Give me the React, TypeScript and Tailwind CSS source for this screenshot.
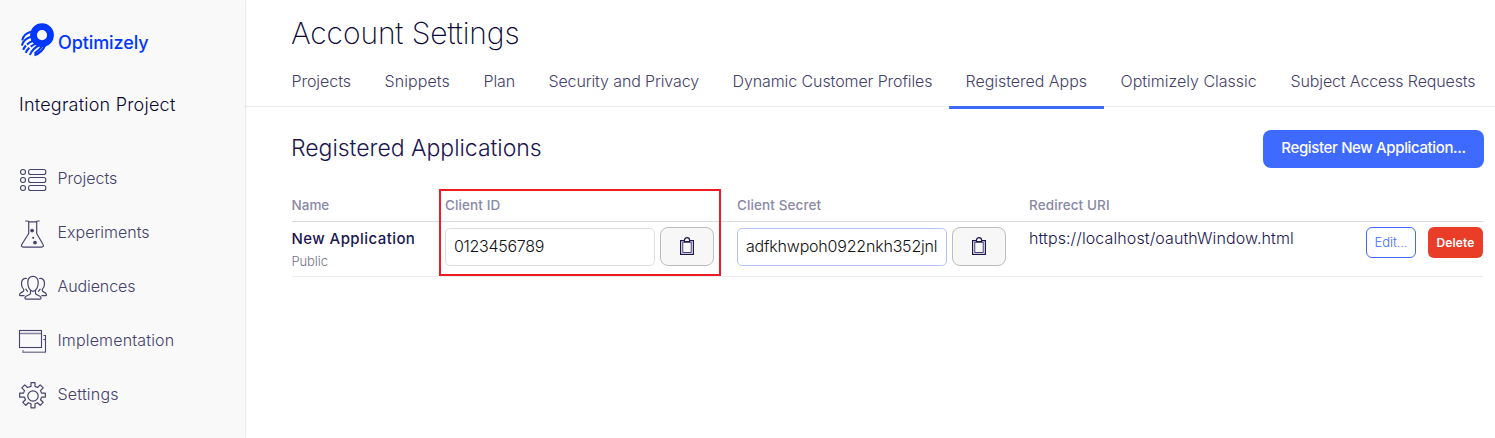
import React from "react";

const ICON = "h-7 w-7 shrink-0 overflow-visible";

function Logo() {
  return (
    <svg className="h-[34px] w-[34px] shrink-0" viewBox="0 0 34 34" fill="none">
      <g stroke="#0037ff" strokeWidth="2.1">
        <path d="M11 8.800C6.500 10 3 13.200 2.300 17.400" />
        <path d="M11.500 13.600C6.600 15.200 2.800 18.400 1.900 22.600" />
        <path d="M13 17.800C8.600 19.600 4.600 22.800 3.200 26.800" strokeDasharray="7 1.500 20" />
        <path d="M16 20.600C11.400 22.600 7.400 25.600 5.800 29.800" strokeDasharray="6 1.800 20" />
        <path d="M20 21.800C15.600 24 11.600 27.400 9.900 32" />
        <path d="M25.800 21C23.400 26.600 19.600 30.600 14.400 32.300M22.500 22.500C20.500 25.500 17.500 28.500 14.500 30.500" />
      </g>
      <circle cx="22" cy="12.100" r="8.500" stroke="#0037ff" strokeWidth="6.800" />
    </svg>
  );
}

function ProjectsIcon() {
  return (
    <svg className={ICON} viewBox="0 0 28 28" fill="none" stroke="#46436d" strokeWidth="1.1">
      {[6, 14, 22].map((y) => (
        <g key={y}>
          <circle cx="4" cy={y} r="2.5" />
          <rect x="9.6" y={y - 2.5} width="17.2" height="5" rx="2" />
        </g>
      ))}
    </svg>
  );
}

function FlaskIcon() {
  return (
    <svg className={ICON} viewBox="0 0 28 28" fill="none" stroke="#46436d" strokeWidth="1.2" strokeLinecap="round" strokeLinejoin="round">
      <path d="M6.600 1h1.800c1.200 0 1.600.9 2.800.9h5c1.200 0 1.600-.9 2.800-.9h1.200M9.700 1.600v11.900L2.900 24.200c-1.100 1.800-.4 2.900 1.400 2.900h18.200c1.800 0 2.500-1.100 1.400-2.900L17.700 13.500V1.600" />
      <circle cx="13.100" cy="10.600" r="1.900" fill="#46436d" stroke="none" />
      <circle cx="14.200" cy="17.800" r="1.100" fill="#46436d" stroke="none" />
      <circle cx="16" cy="22.600" r="1.900" fill="#46436d" stroke="none" />
    </svg>
  );
}

function AudienceIcon() {
  return (
    <svg className={ICON} viewBox="0 0 28 28" fill="none" stroke="#46436d" strokeWidth="1.2" strokeLinecap="round" strokeLinejoin="round">
      <path d="M14 2.400c-3.400 0-5.200 2.500-5.200 6.300 0 4.100 2 8.700 5.200 8.700s5.200-4.600 5.200-8.700c0-3.800-1.800-6.300-5.200-6.300Z" />
      <path d="M11.500 16.600v2.800c0 1.900-5.600 1.800-5.600 4.600 0 .8.500 1.200 1.300 1.200h13.600c.8 0 1.300-.4 1.300-1.200 0-2.800-5.600-2.700-5.600-4.600v-2.800" />
      <path d="M7.600 4.500C4.400 3.900 2.500 6.200 2.500 9.400c0 2.600.8 4.700 2.200 6v1.400c0 1.300-4.200 1.500-4.200 3.900 0 .7.400 1 1 1h3.600M6.900 15.200l1.600 2.100" />
      <path d="M20.400 4.500c3.200-.6 5.100 1.700 5.100 4.900 0 2.600-.8 4.700-2.200 6v1.400c0 1.300 4.200 1.500 4.200 3.900 0 .7-.4 1-1 1h-3.600M21.100 15.200l-1.600 2.100" />
    </svg>
  );
}

function WindowIcon() {
  return (
    <svg className={ICON} viewBox="0 0 28 28" fill="none" stroke="#46436d" strokeWidth="1.100">
      <rect x=".5" y="2.500" width="22" height="17" />
      <path d="M.5 5.500h22" strokeWidth="1.500" opacity=".65" />
      <path d="M24.500 7.500h2V24M24.500 11.500h2" />
      <path d="M4 22v2.200h23" strokeWidth="1.400" opacity=".65" />
    </svg>
  );
}

function GearIcon() {
  return (
    <svg className={ICON} viewBox="0 0 28 28" fill="none" stroke="#46436d" strokeWidth="1.200" strokeLinejoin="round">
      <circle cx="14" cy="14" r="5.200" />
      <path d="M12 .7h4v3.700l2.500 1.100 2.700-2.600 3 3-2.700 2.700 1 2.500h3.800v4.100h-3.700l-1.100 2.500 2.700 2.600-3 3-2.700-2.600-2.500 1.100v4h-4v-4l-2.500-1.100-2.700 2.600-3-3 2.700-2.600-1.100-2.500H.7v-4.100h3.800l1-2.500-2.700-2.700 3-3 2.700 2.600L12 4.400Z" />
    </svg>
  );
}

function ClipboardIcon() {
  return (
    <svg className="h-[18px] w-4" viewBox="0 0 16 18" fill="none" stroke="#1b1650">
      <rect x="1.600" y="3.600" width="12.800" height="13.800" strokeWidth="1.200" />
      <rect x="3.800" y="5.200" width="8.400" height="10.300" strokeWidth=".8" />
      <path d="M5.400 4.600V3.300a2.600 2.600 0 0 1 5.200 0v1.300Z" strokeWidth="1.200" fill="#f7f7f7" />
    </svg>
  );
}

const nav = [
  { label: "Projects", icon: <ProjectsIcon />, cls: "tracking-[0px]" },
  { label: "Experiments", icon: <FlaskIcon />, cls: "tracking-[0px]" },
  { label: "Audiences", icon: <AudienceIcon />, cls: "tracking-[-0.1px]" },
  { label: "Implementation", icon: <WindowIcon />, cls: "tracking-[0.16px]" },
  { label: "Settings", icon: <GearIcon />, cls: "tracking-[0.2px]" },
];

const tabs = [
  { label: "Projects", cls: "w-[93px] tracking-[-0.05px]" },
  { label: "Snippets", cls: "w-[99px] tracking-[0.08px]" },
  { label: "Plan", cls: "w-[65px] tracking-[-0.1px]" },
  { label: "Security and Privacy", cls: "w-[184px] tracking-[-0.13px]" },
  { label: "Dynamic Customer Profiles", cls: "w-[233px] tracking-[-0.09px]" },
  { label: "Registered Apps", cls: "w-[155px] tracking-[-0.03px]", active: true },
  { label: "Optimizely Classic", cls: "w-[170px] tracking-[0px]" },
  { label: "Subject Access Requests", cls: "w-[219px] tracking-[-0.13px]" },
];

function SecretField({ value, focused, cls }: { value: string; focused?: boolean; cls: string }) {
  return (
    <div className="flex items-start gap-[5px]">
      <div
        className={`mt-px flex h-[38px] w-[210px] items-center overflow-hidden rounded-[5px] border bg-white pb-[2px] pl-2 text-base font-light whitespace-nowrap text-[#111] ${cls} ${focused ? "border-[#b5c5fb]" : "border-[#dedede]"}`}
      >
        {value}
      </div>
      <button className="flex h-[39px] w-[54px] items-center justify-center rounded-lg border border-[#bdbdbd] bg-[#f7f7f7] pb-px">
        <ClipboardIcon />
      </button>
    </div>
  );
}

const GRID = "grid grid-cols-[153px_292px_292px_1fr]";

export default function App() {
  return (
    <div className="flex h-[438px] w-[1495px] overflow-hidden bg-white font-['Inter','Liberation_Sans',sans-serif]">
      <aside className="relative z-10 h-full w-[245px] shrink-0 bg-[#f9f9f9] shadow-[0_0_2px_rgba(0,0,0,0.25)]">
        <div className="flex h-[57px] items-end pl-5">
          <Logo />
          <span className="ml-1 h-[27px] text-[18px] leading-[26px] font-medium tracking-[-0.1px] text-[#0037ff]">Optimizely</span>
        </div>
        <div className="mt-[36px] pl-[19px] text-[18px] leading-6 font-light tracking-[0.22px] whitespace-nowrap text-[#080736]">Integration Project</div>
        <nav className="mt-[35px]">
          {nav.map((n) => (
            <div key={n.label} className="flex h-[54px] items-center pt-[1px] pl-[19px]">
              {n.icon}
              <span className={`mb-[3px] ml-[10.500px] text-base leading-6 font-light whitespace-nowrap text-[#44416a] ${n.cls}`}>{n.label}</span>
            </div>
          ))}
        </nav>
      </aside>

      <main className="min-w-0 flex-1">
        <header className="h-[107px] border-b border-[#ececec] pt-[13px]">
          <h1 className="pl-[46px] text-[30px] leading-10 font-extralight tracking-[-0.1px] whitespace-nowrap text-[#080736]">Account Settings</h1>
          <div className="flex h-[56px] pl-[30px]">
            {tabs.map((t) => (
              <div
                key={t.label}
                className={`h-[56px] shrink-0 border-b-[3px] pt-[16px] pl-[16.500px] text-base leading-6 font-light whitespace-nowrap text-[#44416a] ${t.cls} ${t.active ? "border-[#3f6aff]" : "border-transparent"}`}
              >
                {t.label}
              </div>
            ))}
          </div>
        </header>

        <section className="pr-[11px] pl-[47px]">
          <div className="flex h-[61px] items-end justify-between">
            <h2 className="mb-[4px] -ml-px text-[23px] leading-8 font-light tracking-[-0.02px] whitespace-nowrap text-[#1b1650]">Registered Applications</h2>
            <button className="h-[38px] w-[221px] rounded-lg bg-[#3f6aff] pb-[2px] text-center text-[15px] font-medium tracking-[-0.36px] whitespace-nowrap text-white">
              Register New Application...
            </button>
          </div>

          <div className="relative w-[1191px]">
            <div className={`${GRID} h-[54px] items-end border-b border-[#dadada] pb-[6px] text-[13.500px] leading-5 font-medium text-[#8a88a5]`}>
              <span className="-ml-[0.500px]">Name</span>
              <span className="tracking-[0.1px]">Client ID</span>
              <span className="tracking-[0.1px]">Client Secret</span>
              <span className="tracking-[0.1px]">Redirect URI</span>
            </div>
            <div className={`${GRID} h-[55px] items-start border-b border-[#ececec] pt-[5px] text-base`}>
              <div className="-ml-[0.500px] whitespace-nowrap">
                <div className="text-[15px] leading-6 font-medium tracking-[0.43px] text-[#1b1650]">New Application</div>
                <div className="text-[13px] leading-5 font-light tracking-[-0.1px] text-[#75728f]">Public</div>
              </div>
              <SecretField value="0123456789" cls="tracking-[-0.3px]" />
              <SecretField value="adfkhwpoh0922nkh352jnl" focused cls="tracking-[-0.2px]" />
              <div className="flex items-start justify-between">
                <span className="-mt-px leading-6 font-light tracking-[0.1px] whitespace-nowrap text-[#1b1650]">https://localhost/oauthWindow.html</span>
                <div className="flex gap-3">
                  <button className="h-[31px] w-[50px] rounded-[6px] border border-[#3f6aff] pt-px text-[13px] font-light tracking-[-0.1px] text-[#3f6aff]">Edit...</button>
                  <button className="h-[31px] w-[55px] rounded-[6px] bg-[#ea3d28] text-[12px] font-semibold tracking-[0.1px] text-white">Delete</button>
                </div>
              </div>
            </div>
            <div className="pointer-events-none absolute top-[21px] left-[147px] h-[87px] w-[282px] border-2 border-[#ed1c24]" />
          </div>
        </section>
      </main>
    </div>
  );
}
